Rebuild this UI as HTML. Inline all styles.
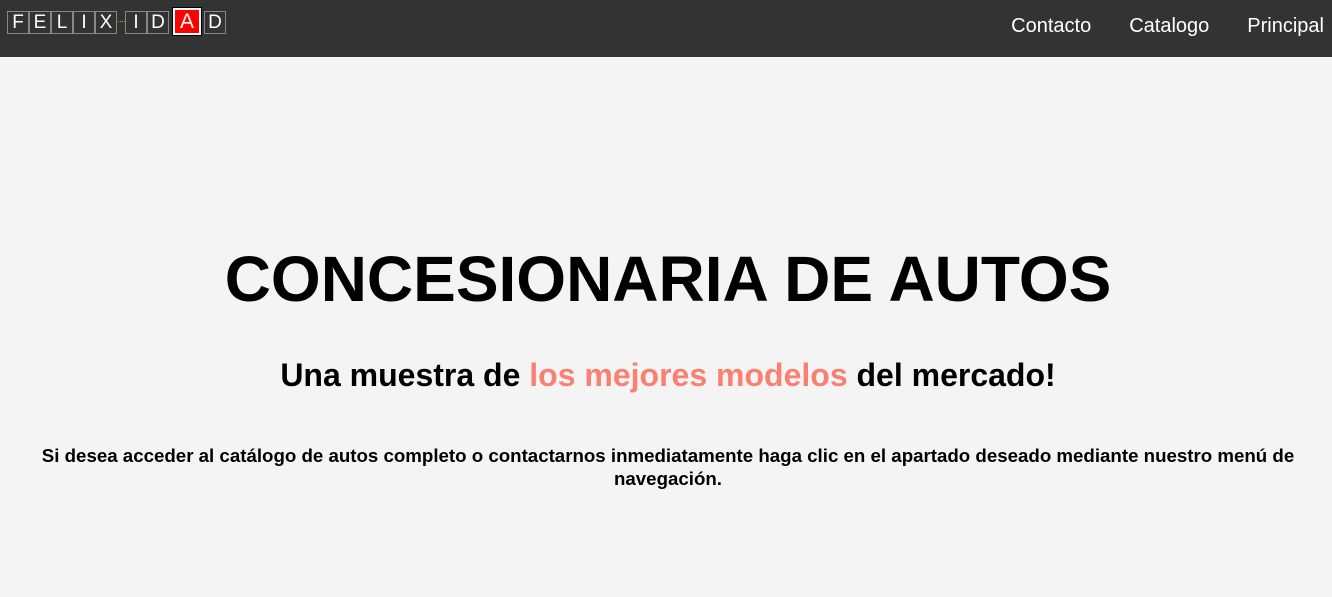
<!DOCTYPE html>
<html><head><meta charset="utf-8"><style>
*{margin:0;padding:0;box-sizing:border-box}
body{width:1332px;height:597px;background:#f4f4f4;font-family:"Liberation Sans",Arial,sans-serif;overflow:hidden;position:relative}
.nav{position:absolute;left:0;top:0;width:1332px;height:57px;background:#333}
.logo{position:absolute;top:11px;left:7px;height:23px}
.b{position:absolute;top:0;width:22px;height:23px;border:1px solid #888;color:#fff;font-size:19px;line-height:21px;text-align:center}
.r{background:#f00;border:2px solid #fff;outline:1px solid #000;top:-3px;height:27px;width:28px;line-height:24px;font-size:21px}
.links{position:absolute;top:15px;right:8px;color:#fff;font-size:20px}
.links span{margin-left:38px}
h1{position:absolute;top:243px;left:0;width:1336px;text-align:center;font-size:64px;font-weight:bold;color:#000;line-height:73px}
h2{position:absolute;top:355px;left:0;width:1336px;text-align:center;font-size:32px;font-weight:bold;line-height:40px}
h2 span{color:#fa8072}
p{position:absolute;top:444px;left:20px;width:1296px;text-align:center;font-size:18.7px;font-weight:bold;line-height:23px}
</style></head><body>
<div class="nav">
 <div class="logo">
  <div class="b" style="left:0">F</div>
  <div class="b" style="left:22px">E</div>
  <div class="b" style="left:44px">L</div>
  <div class="b" style="left:66px">I</div>
  <div class="b" style="left:88px">X</div>
  <div style="position:absolute;left:111px;top:10px;width:7px;border-top:1px dotted #d80"></div>
  <div class="b" style="left:118px">I</div>
  <div class="b" style="left:140px">D</div>
  <div class="b r" style="left:166px">A</div>
  <div class="b" style="left:197px">D</div>
 </div>
 <div class="links"><span>Contacto</span><span>Catalogo</span><span>Principal</span></div>
</div>
<h1>CONCESIONARIA DE AUTOS</h1>
<h2>Una muestra de <span>los mejores modelos</span> del mercado!</h2>
<p>Si desea acceder al catálogo de autos completo o contactarnos inmediatamente haga clic en el apartado deseado mediante nuestro menú de navegación.</p>
</body></html>
